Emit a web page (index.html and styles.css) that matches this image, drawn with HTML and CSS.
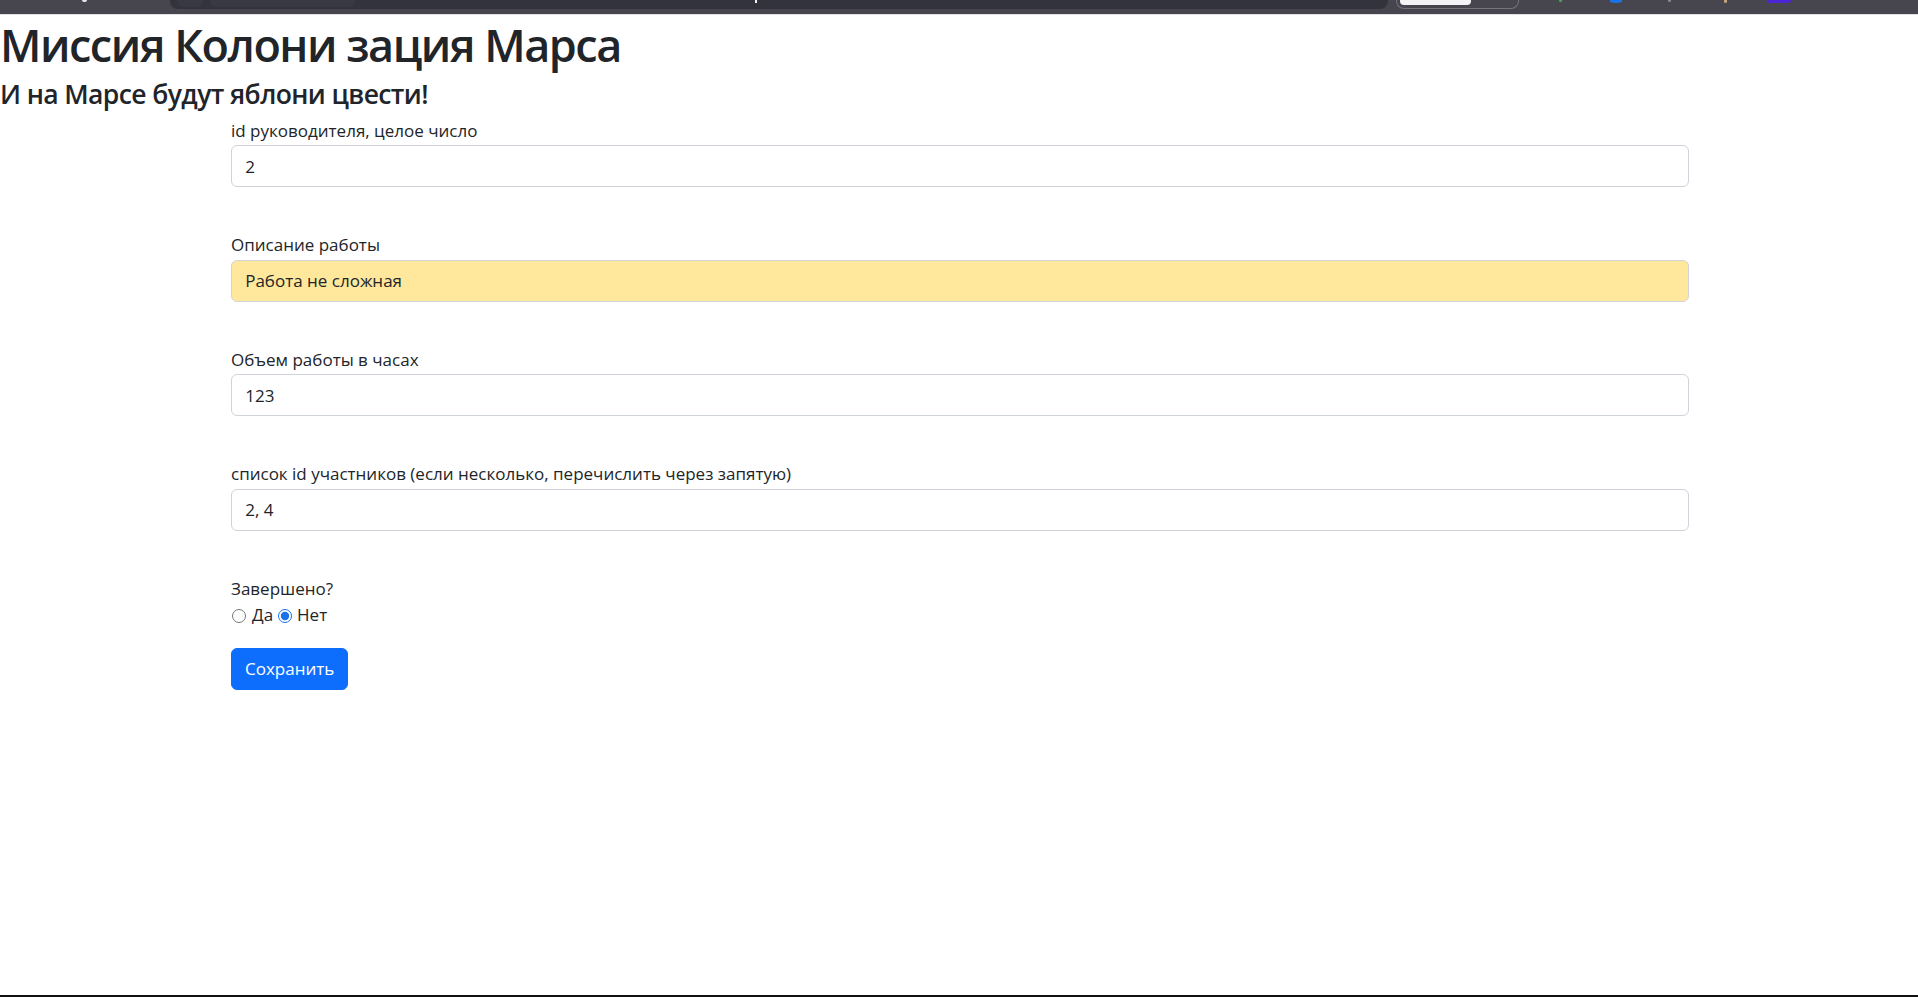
FILE: index.html
```html
<!DOCTYPE html>
<html lang="ru">
<head>
<meta charset="utf-8">
<title>Миссия Колонизация Марса</title>
<link rel="stylesheet" href="styles.css">
</head>
<body>
<div class="page">
  <div class="chrome">
    <span class="chrome-mark"></span>
    <div class="omnibox">
      <span class="omni-tab"></span>
      <span class="omni-field"></span>
      <span class="omni-caret"></span>
    </div>
    <div class="profile-pill"><span class="profile-fill"></span></div>
    <div class="ext-icons">
      <span class="ext ext-green"></span>
      <span class="ext ext-blue"></span>
      <span class="ext ext-gray"></span>
      <span class="ext ext-tan"></span>
      <span class="ext ext-indigo"></span>
    </div>
  </div>
  <main class="content">
    <h1 class="title">Миссия Колони зация Марса</h1>
    <h3 class="subtitle">И на Марсе будут яблони цвести!</h3>
    <form class="job-form">
      <div class="field">
        <label class="field-label" for="team_leader">id руководителя, целое число</label>
        <input class="field-input" id="team_leader" type="text" value="2">
      </div>
      <div class="field">
        <label class="field-label" for="job">Описание работы</label>
        <input class="field-input field-input-autofill" id="job" type="text" value="Работа не сложная">
      </div>
      <div class="field">
        <label class="field-label" for="work_size">Объем работы в часах</label>
        <input class="field-input" id="work_size" type="text" value="123">
      </div>
      <div class="field">
        <label class="field-label" for="collaborators">список id участников (если несколько, перечислить через запятую)</label>
        <input class="field-input" id="collaborators" type="text" value="2, 4">
      </div>
      <div class="status">
        <div class="status-label">Завершено?</div>
        <div class="radios">
          <input class="radio" type="radio" name="is_finished" id="fin_yes" value="1"><label class="radio-text" for="fin_yes">Да</label>
          <input class="radio radio-second" type="radio" name="is_finished" id="fin_no" value="0" checked><label class="radio-text" for="fin_no">Нет</label>
        </div>
      </div>
      <button class="btn-save" type="submit">Сохранить</button>
    </form>
  </main>
  <div class="bottom-edge"></div>
</div>
</body>
</html>
```
FILE: styles.css
```css
* { box-sizing: border-box; }
html, body { margin: 0; padding: 0; background: #fff; }
body {
  font-family: "Open Sans", "Noto Sans", "Liberation Sans", sans-serif;
  color: #212529;
}
.page {
  min-height: 997px;
  display: flex;
  flex-direction: column;
}
/* browser chrome strip at top */
.chrome {
  height: 15px;
  background: #47464f;
  border-bottom: 1px solid #dfe1e5;
  display: flex;
  align-items: flex-start;
  flex-shrink: 0;
}
.chrome-mark {
  width: 5px; height: 2px; margin-left: 82px;
  background: #e8e8ea; border-radius: 0 0 3px 3px;
}
.omnibox {
  margin-left: 83px;
  width: 1218px; height: 9px;
  background: #33333d;
  border-radius: 0 0 8px 8px;
  display: flex; align-items: flex-start;
}
.omni-tab {
  width: 26px; height: 7px; margin-left: 7px;
  background: #393943; border-radius: 0 0 6px 6px;
}
.omni-field {
  width: 145px; height: 7px; margin-left: 7px;
  background: #393943; border-radius: 0 0 6px 6px;
}
.omni-caret {
  width: 2px; height: 3px; margin-left: 400px; background: #f2f2f2;
}
.profile-pill {
  margin-left: 8px;
  width: 123px; height: 9px;
  border: 1px solid #75747d; border-top: 0;
  border-radius: 0 0 8px 8px;
  padding-left: 3px;
}
.profile-fill {
  display: block; width: 71px; height: 5px;
  background: #f4f4f6; border-radius: 0 0 4px 4px;
}
.ext-icons { display: flex; align-items: flex-start; margin-left: 40px; }
.ext { display: block; border-radius: 0 0 50% 50%; }
.ext-green { width: 3px; height: 2px; background: #3fae4f; }
.ext-blue { width: 12px; height: 3px; background: #1a73e8; margin-left: 48px; }
.ext-gray { width: 3px; height: 2px; background: #8a8a8a; margin-left: 46px; }
.ext-tan { width: 3px; height: 3px; background: #c9a27a; margin-left: 53px; }
.ext-indigo { width: 24px; height: 3px; background: #4a25d6; margin-left: 40px; border-radius: 0 0 3px 3px; }

.content { flex: 1; }
.title {
  margin: 0;
  font-size: 45px;
  font-weight: 600;
  line-height: 60px;
  letter-spacing: -1.5px;
}
.subtitle {
  margin: 1px 0 0;
  font-size: 26.5px;
  font-weight: 600;
  line-height: 36px;
  letter-spacing: -0.6px;
}
.job-form {
  width: 1458px;
  margin: 6px 0 0 calc(50% - 728px);
  font-size: 17px;
  line-height: 26.4px;
}
.field { margin-bottom: 45px; }
.field-label {
  display: block;
  margin-bottom: 1px;
}
.field-input {
  display: block;
  width: 100%;
  height: 42px;
  padding: 6.6px 13.2px;
  font: inherit;
  color: #212529;
  background: #fff;
  border: 1px solid #ced4da;
  border-radius: 6px;
  outline: none;
}
.field-input-autofill { background: #ffe89b; }
.status { margin-bottom: 20px; }
.status-label { display: block; }
.radios { display: flex; align-items: center; }
.radio {
  width: 14px; height: 14px;
  margin: 2px 6px 0 1px;
  accent-color: #1a73e8;
}
.radio-second { margin-left: 5px; margin-right: 5px; }
.btn-save {
  display: block;
  height: 42px;
  padding: 0 13px;
  font: inherit;
  color: #fff;
  background: #0d6efd;
  border: 1px solid #0d6efd;
  border-radius: 6px;
}
.bottom-edge {
  height: 2px;
  background: #111;
  flex-shrink: 0;
}
```
